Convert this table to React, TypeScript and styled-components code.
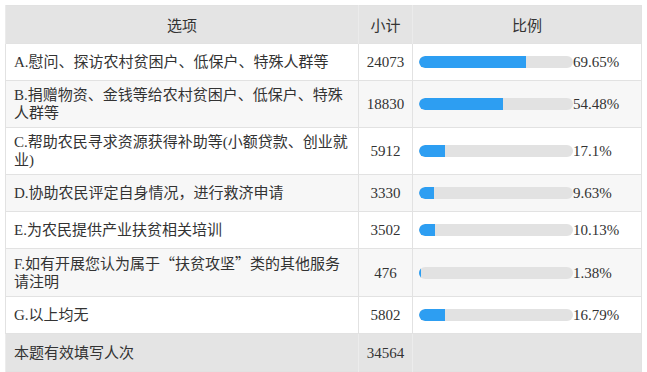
import React, {FC} from 'react';
import styled, {createGlobalStyle} from "styled-components";

interface IOption {
    label: React.ReactNode,
    count: number,
    percent: number
}

const GlobalStyle = createGlobalStyle`
  html, body {
    margin: 0;
    padding: 0;
    background: #fff;
  }
  body {
    font-family: "Liberation Serif", "Noto Sans CJK SC", serif;
    color: #333;
  }
`

const Page = styled.div`
  padding: 5px 6px 5px 5px;
`

const Table = styled.table`
  width: 636px;
  border-collapse: collapse;
  table-layout: fixed;
  font-size: 15px;
  line-height: 18px;
  border: 1px solid #e2e2e2;
`

const HeadCell = styled.th`
  background: #e4e4e4;
  font-weight: normal;
  height: 37px;
  padding: 0;
  text-align: center;
  border-left: 1px solid #ebebeb;
  font-family: "Noto Sans CJK SC", sans-serif;
`

const Row = styled.tr<{ $striped: boolean }>`
  background: ${p => p.$striped ? '#f7f7f7' : '#fff'};
  height: 37px;

  > td {
    border-top: 1px solid #e2e2e2;
    border-left: 1px solid #e2e2e2;
  }
`

const LabelCell = styled.td`
  padding: 5px 8px 5px 8px;
  vertical-align: middle;
`

const CountCell = styled.td`
  text-align: center;
  vertical-align: middle;
  padding: 0;
`

const RatioCell = styled.td`
  padding: 0 0 0 6px;
  vertical-align: middle;
`

const Ratio = styled.div`
  display: flex;
  align-items: center;
`

const Track = styled.div`
  width: 154px;
  height: 12px;
  border-radius: 6px;
  background: #e2e2e2;
  overflow: hidden;
  flex-shrink: 0;
`

const Fill = styled.div`
  height: 100%;
  background: #2d9ef2;
  border-radius: 6px 0 0 6px;
`

const Percent = styled.span`
  font-size: 15px;
`

const Quote = styled.span`
  font-family: "Noto Sans CJK SC", sans-serif;
`

const FooterRow = styled.tr`
  background: #e4e4e4;
  height: 38px;

  > td {
    border-top: 1px solid #e2e2e2;
    border-left: 1px solid #ececec;
  }
`

const options: IOption[] = [
    {label: 'A.慰问、探访农村贫困户、低保户、特殊人群等', count: 24073, percent: 69.65},
    {label: 'B.捐赠物资、金钱等给农村贫困户、低保户、特殊人群等', count: 18830, percent: 54.48},
    {label: 'C.帮助农民寻求资源获得补助等(小额贷款、创业就业)', count: 5912, percent: 17.1},
    {label: 'D.协助农民评定自身情况，进行救济申请', count: 3330, percent: 9.63},
    {label: 'E.为农民提供产业扶贫相关培训', count: 3502, percent: 10.13},
    {
        label: <>F.如有开展您认为属于<Quote>“扶贫攻坚”</Quote>类的其他服务请注明</>,
        count: 476,
        percent: 1.38
    },
    {label: 'G.以上均无', count: 5802, percent: 16.79},
]

const OptionRow: FC<{ option: IOption, index: number }> = ({option, index}) => (
    <Row $striped={index % 2 === 1}>
        <LabelCell>{option.label}</LabelCell>
        <CountCell>{option.count}</CountCell>
        <RatioCell>
            <Ratio>
                <Track>
                    <Fill style={{width: `${option.percent}%`}}/>
                </Track>
                <Percent>{option.percent}%</Percent>
            </Ratio>
        </RatioCell>
    </Row>
)

const App: FC = () => {
    return (
        <Page>
            <GlobalStyle/>
            <Table>
                <colgroup>
                    <col style={{width: 353}}/>
                    <col style={{width: 54}}/>
                    <col style={{width: 229}}/>
                </colgroup>
                <thead>
                <tr>
                    <HeadCell>选项</HeadCell>
                    <HeadCell>小计</HeadCell>
                    <HeadCell>比例</HeadCell>
                </tr>
                </thead>
                <tbody>
                {options.map((o, i) => <OptionRow key={i} option={o} index={i}/>)}
                <FooterRow>
                    <LabelCell>本题有效填写人次</LabelCell>
                    <CountCell>34564</CountCell>
                    <td/>
                </FooterRow>
                </tbody>
            </Table>
        </Page>
    );
};

export default App;
